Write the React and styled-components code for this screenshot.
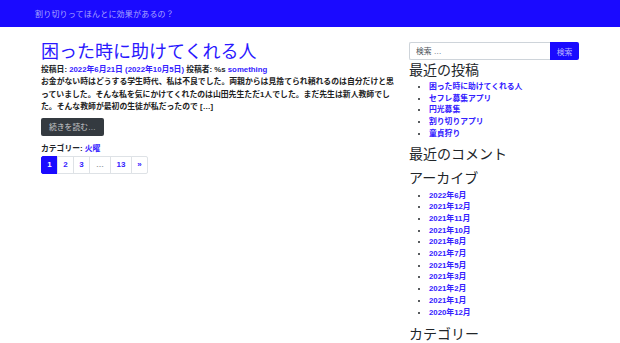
import styled, { createGlobalStyle } from 'styled-components';

const GlobalStyle = createGlobalStyle`
  body {
    margin: 0;
    font-family: 'Liberation Sans', 'Noto Sans CJK JP', sans-serif;
    color: #212529;
    background: #fff;
  }
  a { color: #3320ff; text-decoration: none; }
`;

const Header = styled.header`
  height: 27px;
  background: #1a0aff;
  display: flex;
  align-items: center;
  padding-left: 35px;
`;

const SiteTitle = styled.div`
  font-size: 8px;
  color: rgba(255, 255, 255, 0.62);
  letter-spacing: 0.2px;
`;

const Layout = styled.div`
  display: flex;
  gap: 13px;
  padding: 0 41px;
`;

const Main = styled.main`
  width: 355px;
  padding-top: 13px;
`;

const PostTitle = styled.h2`
  margin: 0;
  font-size: 18px;
  font-weight: 400;
  line-height: 24px;
  color: #2a18ff;
`;

const Meta = styled.div`
  font-size: 7.8px;
  font-weight: bold;
  line-height: 12px;
`;

const Excerpt = styled.p`
  margin: 0;
  font-size: 7.85px;
  font-weight: bold;
  line-height: 12.5px;
  color: #222;
`;

const MoreButton = styled.a`
  display: inline-flex;
  align-items: center;
  margin-top: 4px;
  height: 18px;
  padding: 0 8px;
  background: #343a40;
  border-radius: 2px;
  color: #c6c8ca !important;
  font-size: 7.8px;
`;

const Category = styled.div`
  margin-top: 7px;
  font-size: 7.8px;
  font-weight: bold;
  line-height: 12px;
`;

const Pager = styled.ul`
  display: flex;
  list-style: none;
  margin: 1px 0 0;
  padding: 0;
`;

const PageItem = styled.li`
  min-width: ${(p) => p.$w}px;
  height: 18px;
  box-sizing: border-box;
  display: flex;
  align-items: center;
  justify-content: center;
  border: 1px solid #dee2e6;
  margin-left: -1px;
  font-size: 8px;
  font-weight: bold;
  background: ${(p) => (p.$active ? '#1a0aff' : '#fff')};
  color: ${(p) => (p.$active ? '#fff' : p.$muted ? '#9aa0a6' : '#3320ff')};
  border-color: ${(p) => (p.$active ? '#1a0aff' : '#dee2e6')};
  &:first-child { margin-left: 0; border-radius: 2px 0 0 2px; }
  &:last-child { border-radius: 0 2px 2px 0; }
`;

const Sidebar = styled.aside`
  width: 170px;
  padding-top: 15px;
`;

const SearchForm = styled.form`
  display: flex;
  height: 18px;
`;

const SearchInput = styled.input`
  flex: 1;
  min-width: 0;
  box-sizing: border-box;
  height: 18px;
  border: 1px solid #ced4da;
  border-right: none;
  border-radius: 2px 0 0 2px;
  padding: 0 6px;
  font-family: inherit;
  font-size: 7.8px;
  &::placeholder { color: #495057; }
`;

const SearchButton = styled.button`
  width: 29px;
  height: 18px;
  border: none;
  border-radius: 0 2px 2px 0;
  background: #1a0aff;
  color: rgba(255, 255, 255, 0.7);
  font-family: inherit;
  font-size: 7.8px;
  padding: 0;
`;

const WidgetTitle = styled.h2`
  margin: ${(p) => p.$top}px 0 0;
  font-size: 14px;
  font-weight: 400;
  line-height: 18px;
  color: #212529;
`;

const WidgetList = styled.ul`
  margin: ${(p) => p.$top}px 0 0;
  padding-left: 20px;
  font-size: 7.8px;
  font-weight: bold;
  line-height: 11.7px;
`;

const recentPosts = ['困った時に助けてくれる人', 'セフレ募集アプリ', '円光募集', '割り切りアプリ', '童貞狩り'];
const archives = [
  '2022年6月', '2021年12月', '2021年11月', '2021年10月', '2021年8月', '2021年7月',
  '2021年5月', '2021年3月', '2021年2月', '2021年1月', '2020年12月',
];
const pages = [
  { label: '1', w: 17, active: true },
  { label: '2', w: 17 },
  { label: '3', w: 17 },
  { label: '…', w: 22, muted: true },
  { label: '13', w: 22 },
  { label: '»', w: 17 },
];

export default function App() {
  return (
    <>
      <GlobalStyle />
      <Header>
        <SiteTitle>割り切りってほんとに効果があるの？</SiteTitle>
      </Header>
      <Layout>
        <Main>
          <PostTitle>困った時に助けてくれる人</PostTitle>
          <Meta>
            投稿日: <a href="#">2022年6月21日 (2022年10月5日)</a> 投稿者: %s <a href="#">something</a>
          </Meta>
          <Excerpt>
            お金がない時はどうする学生時代、私は不良でした。両親からは見捨てられ頼れるのは自分だけと思っていました。そんな私を気にかけてくれたのは山田先生ただ1人でした。まだ先生は新人教師でした。そんな教師が最初の生徒が私だったので [&hellip;]
          </Excerpt>
          <MoreButton href="#">続きを読む…</MoreButton>
          <Category>
            カテゴリー: <a href="#">火曜</a>
          </Category>
          <Pager>
            {pages.map((p) => (
              <PageItem key={p.label} $w={p.w} $active={p.active} $muted={p.muted}>
                {p.label}
              </PageItem>
            ))}
          </Pager>
        </Main>
        <Sidebar>
          <SearchForm onSubmit={(e) => e.preventDefault()}>
            <SearchInput placeholder="検索 …" />
            <SearchButton>検索</SearchButton>
          </SearchForm>
          <WidgetTitle $top={1}>最近の投稿</WidgetTitle>
          <WidgetList $top={2}>
            {recentPosts.map((t) => (
              <li key={t}><a href="#">{t}</a></li>
            ))}
          </WidgetList>
          <WidgetTitle $top={5}>最近のコメント</WidgetTitle>
          <WidgetTitle $top={6}>アーカイブ</WidgetTitle>
          <WidgetList $top={3}>
            {archives.map((t) => (
              <li key={t}><a href="#">{t}</a></li>
            ))}
          </WidgetList>
          <WidgetTitle $top={7}>カテゴリー</WidgetTitle>
        </Sidebar>
      </Layout>
    </>
  );
}
